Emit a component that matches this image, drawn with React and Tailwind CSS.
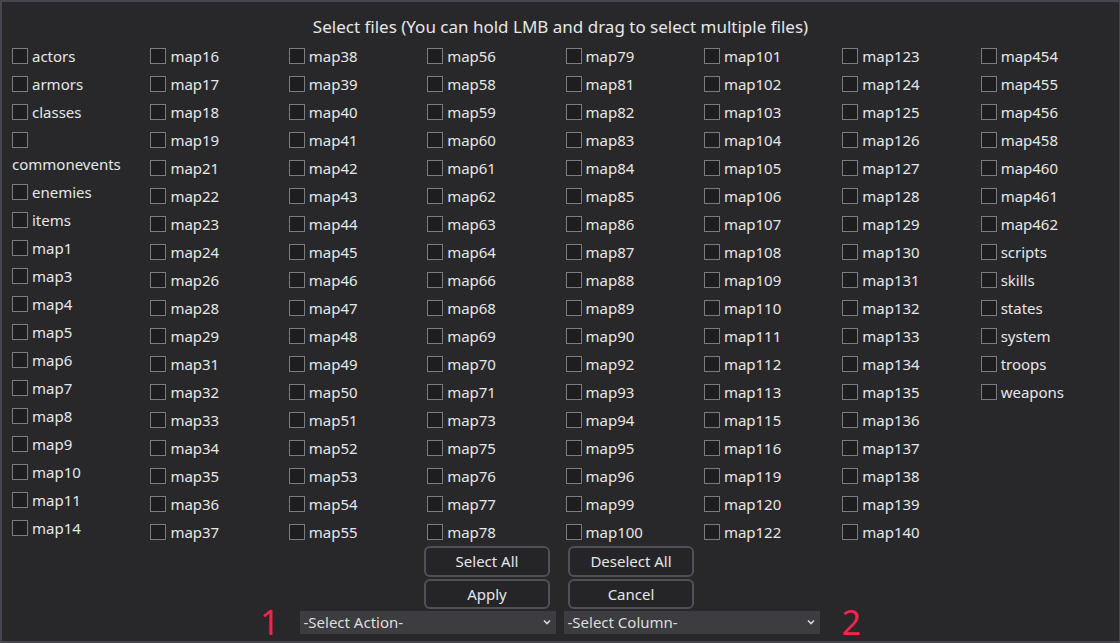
import React from 'react';

const columns = [
  ['actors', 'armors', 'classes', 'commonevents', 'enemies', 'items', 'map1', 'map3', 'map4', 'map5', 'map6', 'map7', 'map8', 'map9', 'map10', 'map11', 'map14'],
  ['map16', 'map17', 'map18', 'map19', 'map21', 'map22', 'map23', 'map24', 'map26', 'map28', 'map29', 'map31', 'map32', 'map33', 'map34', 'map35', 'map36', 'map37'],
  ['map38', 'map39', 'map40', 'map41', 'map42', 'map43', 'map44', 'map45', 'map46', 'map47', 'map48', 'map49', 'map50', 'map51', 'map52', 'map53', 'map54', 'map55'],
  ['map56', 'map58', 'map59', 'map60', 'map61', 'map62', 'map63', 'map64', 'map66', 'map68', 'map69', 'map70', 'map71', 'map73', 'map75', 'map76', 'map77', 'map78'],
  ['map79', 'map81', 'map82', 'map83', 'map84', 'map85', 'map86', 'map87', 'map88', 'map89', 'map90', 'map92', 'map93', 'map94', 'map95', 'map96', 'map99', 'map100'],
  ['map101', 'map102', 'map103', 'map104', 'map105', 'map106', 'map107', 'map108', 'map109', 'map110', 'map111', 'map112', 'map113', 'map115', 'map116', 'map119', 'map120', 'map122'],
  ['map123', 'map124', 'map125', 'map126', 'map127', 'map128', 'map129', 'map130', 'map131', 'map132', 'map133', 'map134', 'map135', 'map136', 'map137', 'map138', 'map139', 'map140'],
  ['map454', 'map455', 'map456', 'map458', 'map460', 'map461', 'map462', 'scripts', 'skills', 'states', 'system', 'troops', 'weapons'],
];

const Box = () => (
  <span className="inline-block w-[16px] h-[16px] border border-[#7c7c80] bg-[#1e1e20] shrink-0" />
);

const FileItem = ({ name }) => {
  if (name.length > 10) {
    return (
      <div className="flex flex-col mb-[4px]">
        <div className="h-[28px] flex items-center"><Box /></div>
        <div className="h-[20px] flex items-center">{name}</div>
      </div>
    );
  }
  return (
    <div className="h-[28px] flex items-center gap-[4px]">
      <Box />
      <span>{name}</span>
    </div>
  );
};

const Chevron = () => (
  <svg width="10" height="10" viewBox="0 0 10 10" className="shrink-0">
    <path d="M2 3.5 L5 6.5 L8 3.5" fill="none" stroke="#d8d8d8" strokeWidth="1.6" />
  </svg>
);

const btn = "w-[126px] rounded-md border-2 border-[#505056] bg-[#252528]";

const App = () => {
  return (
    <div
      className="w-[1120px] h-[643px] bg-[#28282b] text-[#e6e6e6] border-t-2 border-l-2 border-b-2 border-r border-[#46464c] flex flex-col overflow-hidden"
      style={{ fontFamily: '"Noto Sans", "Open Sans", sans-serif' }}
    >
      <div className="h-[40px] shrink-0 flex items-start justify-center text-[17px] pt-[12px] leading-[26px]">
        Select files (You can hold LMB and drag to select multiple files)
      </div>

      {/* file list */}
      <div className="grid grid-cols-8 pl-[10px] text-[15px] h-[504px] shrink-0">
        {columns.map((col, idx) => (
          <div key={idx} className="flex flex-col">
            {col.map(name => <FileItem key={name} name={name} />)}
          </div>
        ))}
      </div>

      {/* buttons */}
      <div className="flex flex-col items-center gap-[3px] text-[15px] shrink-0 pr-[3px]">
        <div className="flex gap-[18px]">
          <button className={`${btn} h-[31px]`}>Select All</button>
          <button className={`${btn} h-[31px]`}>Deselect All</button>
        </div>
        <div className="flex gap-[18px] -mt-[1px]">
          <button className={`${btn} h-[30px]`}>Apply</button>
          <button className={`${btn} h-[30px]`}>Cancel</button>
        </div>
      </div>

      {/* selects */}
      <div className="h-[46px] shrink-0 flex items-center justify-center text-[15px] -mt-[10px]">
        <span className="text-[#f0264b] text-[34px] leading-[46px] mr-[20px]">1</span>
        <div className="w-[256px] h-[23px] bg-[#3c3c41] flex items-center justify-between px-[4px] text-[#dedede] mr-[8px]">
          <span>-Select Action-</span>
          <Chevron />
        </div>
        <div className="w-[256px] h-[23px] bg-[#3c3c41] flex items-center justify-between px-[4px] text-[#dedede] mr-[22px]">
          <span>-Select Column-</span>
          <Chevron />
        </div>
        <span className="text-[#f0264b] text-[34px] leading-[46px]">2</span>
      </div>
    </div>
  );
};

export default App;
